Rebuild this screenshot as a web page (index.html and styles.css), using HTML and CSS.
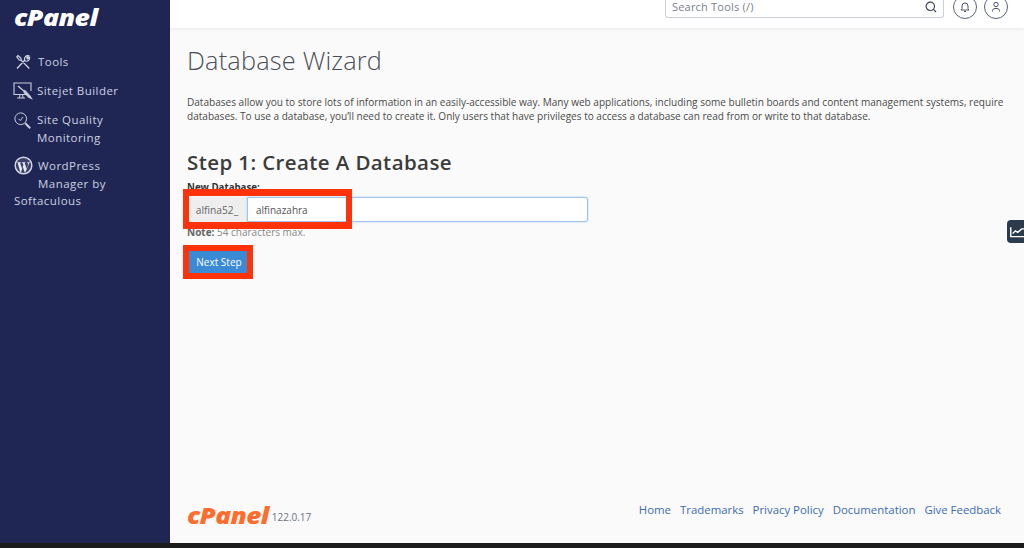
FILE: index.html
```html
<!DOCTYPE html>
<html lang="en">
<head>
<meta charset="utf-8">
<title>Database Wizard</title>
<link rel="stylesheet" href="styles.css">
</head>
<body>
<div class="app">
  <aside class="sidebar">
    <div class="logo">cPanel</div>
    <nav class="nav">
      <a class="nav-item one">
        <svg class="ico" viewBox="0 0 16 16" fill="none" stroke="#d5d9e6" stroke-width="1.2"><path d="M2 14.500 9.500 6.500C9 3.500 11 1 13.800 1.800L11.800 3.800 12.400 4.800 14.600 3.200C15 6 13 7.500 10.800 7.200L9.500 6.500M14.300 14.500 6.300 6.300 4.300 6 1.800 2.800 3 1.600 5.800 4 6.300 6.300"/></svg>
        <span>Tools</span>
      </a>
      <a class="nav-item two">
        <svg class="ico wide" viewBox="0 0 20 18" fill="none" stroke="#c9cede" stroke-width="1.1"><path d="M14 12.500H1V1h17v8M7 12.500 6.500 15.500M4 16h8M9.500 12.500 10 15.500"/><path d="M5 4 12 10" stroke-width="1.4"/><path d="M12 8.500 17 14 18.500 16.500 15.800 15.300 11 10.300Z" fill="#c9cede"/></svg>
        <span>Sitejet Builder</span>
      </a>
      <a class="nav-item three">
        <svg class="ico wide" viewBox="0 0 20 20" fill="none" stroke="#c9cede" stroke-width="1.1"><circle cx="7.500" cy="7.500" r="6.500"/><path d="M5 7.500 7 9.500 10 5.500"/><path d="M12.500 12.500 18 18" stroke-width="2.200"/></svg>
        <span>Site Quality<br>Monitoring</span>
      </a>
      <a class="nav-item four">
        <span class="wp-line">
          <svg class="ico wp" viewBox="0 0 20 20"><circle cx="10" cy="10" r="9.500" fill="#d5d9e6"/><circle cx="10" cy="10" r="8" fill="#3b416b"/><path d="M3.500 6.500h3.900v.6l-1 .2 2.200 6.200 1.300-3.900-.9-2.300-.8-.2v-.6h4v.6l-1 .2 2.200 6.200 1.300-4c.4-1.300-.2-2-.7-2.300v-.6h2.600v.6c-.6.300-.9.800-1.200 1.700L12 17h-.8L9.300 11.500 7.400 17h-.8L3.900 7.300l-.4-.2Z" fill="#e8eaf2"/></svg>
          <span>WordPress</span>
        </span>
        <span class="wp-ind">Manager by</span>
        <span>Softaculous</span>
      </a>
    </nav>
  </aside>
  <div class="body">
    <header class="topbar">
      <div class="search">
        <span>Search Tools (/)</span>
        <svg class="search-ico" viewBox="0 0 12 12" fill="none" stroke="#3c4257" stroke-width="1.2"><circle cx="5.300" cy="5.300" r="4.200"/><path d="M8.400 8.400 11 11"/></svg>
      </div>
      <div class="round">
        <svg viewBox="0 0 12 12" fill="none" stroke="#4b5270" stroke-width="1"><path d="M2 9h8L9 7.500V5a3 3 0 0 0-6 0v2.500ZM5 10.500h2"/></svg>
      </div>
      <div class="round">
        <svg viewBox="0 0 12 12" fill="none" stroke="#4b5270" stroke-width="1"><circle cx="6" cy="3.500" r="2.200"/><path d="M2.500 10.500V9.500A2.500 2.500 0 0 1 5 7.500h2A2.500 2.500 0 0 1 9.500 9.500v1"/></svg>
      </div>
    </header>
    <main class="main">
      <h1 class="title">Database Wizard</h1>
      <p class="intro">Databases allow you to store lots of information in an easily-accessible way. Many web applications, including some bulletin boards and content management systems, require databases. To use a database, you’ll need to create it. Only users that have privileges to access a database can read from or write to that database.</p>
      <h2 class="step">Step 1: Create A Database</h2>
      <label class="lbl">New Database:</label>
      <div class="field">
        <span class="prefix">alfina52_</span>
        <span class="input">alfinazahra</span>
      </div>
      <p class="note"><b>Note:</b> 54 characters max.</p>
      <button class="btn">Next Step</button>
      <div class="mark mark-field"></div>
      <div class="mark mark-btn"></div>
      <div class="tab">
        <svg viewBox="0 0 18 14" fill="none" stroke="#fff" stroke-width="1.800"><path d="M1 1v12h17"/><path d="M3.500 9 7 5.500 10 7.500 15 3h3"/></svg>
      </div>
      <footer class="footer">
        <div class="brand"><span class="logo-foot">cPanel</span><span class="ver">122.0.17</span></div>
        <nav class="links">
          <a>Home</a><a>Trademarks</a><a>Privacy Policy</a><a>Documentation</a><a>Give Feedback</a>
        </nav>
      </footer>
    </main>
  </div>
</div>
<div class="strip"></div>
</body>
</html>
```
FILE: styles.css
```css
* { box-sizing: border-box; }
html, body { margin: 0; height: 100%; overflow: hidden; }
body { font-family: "Open Sans", sans-serif; color: #333; }
.app { display: flex; height: 543px; }
.sidebar { width: 170px; flex: none; background: #1f2653; color: #ccd1e2; padding: 4px 14px 0; }
.logo { font-weight: 800; font-style: italic; font-size: 23px; line-height: 26px; color: #fff; letter-spacing: -0.5px; transform: scaleX(1.16); transform-origin: left center; }
.nav { display: flex; flex-direction: column; margin-top: 22px; font-size: 11.500px; letter-spacing: 0.450px; }
.nav-item { display: flex; align-items: flex-start; }
.one { height: 29px; line-height: 20px; }
.two { height: 29px; line-height: 20px; }
.three { height: 46px; padding-top: 1px; line-height: 17.500px; }
.four { display: block; line-height: 17.300px; }
.wp-ind, .four > span:last-child { display: block; }
.ico { width: 16px; height: 16px; flex: none; margin: 2px 7px 0 1px; }
.ico.wide { width: 20px; height: 18px; margin: 1px 4px 0 -1px; }
.wp-line { display: flex; align-items: center; }
.ico.wp { width: 19px; height: 19px; margin: 0 5px 0 0; }
.wp-ind { margin-left: 24px; }
.body { flex: 1; min-width: 0; display: flex; flex-direction: column; background: #fafafa; }
.topbar { height: 28px; flex: none; background: #fff; box-shadow: 0 1px 3px rgba(0,0,0,.08); display: flex; justify-content: flex-end; align-items: flex-start; gap: 7px; padding-right: 16px; position: relative; }
.search { width: 279px; height: 18px; margin-right: 2px; border: 1px solid #ccd0dc; border-top: 0; border-radius: 0 0 3px 3px; display: flex; align-items: flex-start; justify-content: space-between; padding: 0 6px; font-size: 11px; letter-spacing: 0.200px; line-height: 14px; color: #7a7f8c; }
.search-ico { width: 12px; height: 12px; margin-top: 1px; }
.round { width: 24px; height: 24px; margin-top: -5px; border: 1px solid #5a6180; border-radius: 50%; display: flex; align-items: flex-end; justify-content: center; padding-bottom: 5px; background: #fff; }
.round svg { width: 12px; height: 12px; }
.main { flex: 1; position: relative; padding: 0 17px; display: flex; flex-direction: column; align-items: flex-start; min-height: 0; }
.title { font-weight: 300; font-size: 25.300px; line-height: 36px; margin: 14px 0 0; color: #4a4f57; letter-spacing: 0.200px; }
.intro { font-size: 10.050px; line-height: 14px; margin: 17px 0 0; color: #4a4a4a; width: 825px; }
.step { font-weight: 600; font-size: 20.500px; line-height: 28px; margin: 25px 0 0; color: #3c3c3c; letter-spacing: 0.400px; }
.lbl { font-size: 9.700px; font-weight: 700; line-height: 12px; margin-top: 6px; color: #333; }
.field { display: flex; width: 401px; height: 25px; margin-top: 3px; }
.prefix { width: 60px; background: #eee; font-size: 10.200px; color: #666; display: flex; align-items: center; justify-content: center; }
.input { flex: 1; background: #fff; border: 1px solid #9fc6ea; border-radius: 0 3px 3px 0; box-shadow: 0 0 2px rgba(100,170,235,.6); font-size: 10px; color: #555; display: flex; align-items: center; padding-left: 8px; }
.note { margin: 3px 0 0; font-size: 10px; line-height: 14px; color: #888; }
.note b { color: #666; }
.btn { margin-top: 11px; width: 60px; height: 24px; background: #3a8ad6; color: #fff; border: 0; padding: 0 0 0 4px; font-family: inherit; font-size: 10px; }
.mark { position: absolute; border: 6px solid #ff3209; }
.mark-field { left: 13px; top: 161px; width: 169px; height: 40px; border-top-width: 7px; border-bottom-width: 7px; }
.mark-btn { left: 13px; top: 217px; width: 70px; height: 34px; }
.tab { position: absolute; right: 0; top: 192px; width: 17px; height: 23px; background: #2c3a4e; border-radius: 4px 0 0 4px; display: flex; align-items: center; padding-left: 3px; }
.tab svg { width: 14px; height: 12px; flex: none; }
.footer { margin-top: auto; width: 815px; display: flex; justify-content: space-between; align-items: center; height: 24px; margin-bottom: 16px; }
.brand { display: flex; align-items: flex-end; }
.logo-foot { font-weight: 800; font-style: italic; font-size: 22px; line-height: 24px; color: #ff6c2c; letter-spacing: -0.5px; transform: scaleX(1.19); transform-origin: left center; margin-right: 15px; }
.ver { font-size: 10px; line-height: 14px; color: #6b7280; margin-left: 1px; margin-bottom: 3px; }
.links { display: flex; gap: 9px; font-size: 11.400px; color: #3d6cb5; margin-top: -11px; margin-right: 1px; }
.strip { height: 5px; background: #1c1c1c; }
```
